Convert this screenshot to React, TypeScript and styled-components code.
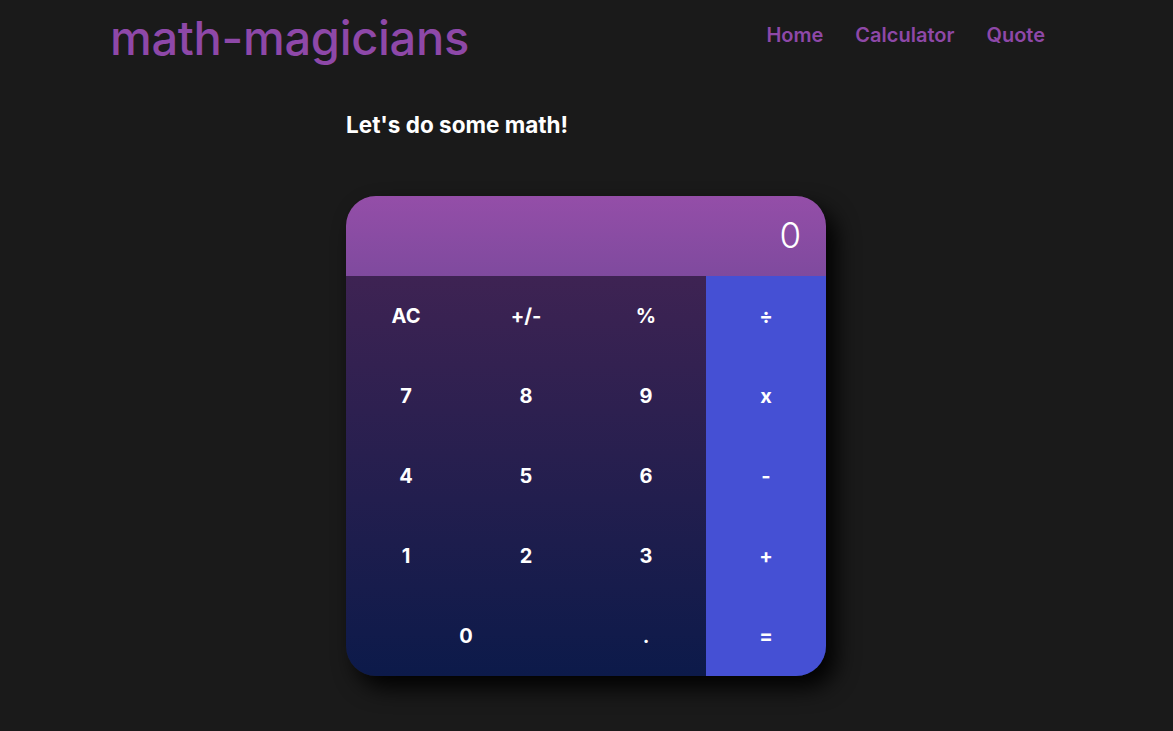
import React from 'react';
import styled, { createGlobalStyle } from 'styled-components';

const Global = createGlobalStyle`
  html, body { margin: 0; padding: 0; background: #1a1a1a; }
  body { font-family: Inter, "Liberation Sans", sans-serif; color: #fff; min-height: 731px; }
  * { box-sizing: border-box; }
`;

const Header = styled.header`
  display: flex;
  align-items: center;
  justify-content: space-between;
  padding: 4px 128px 0 110px;
  height: 70px;
`;

const Title = styled.h1`
  margin: 0;
  font-size: 47px;
  font-weight: 500;
  color: #8e48a8;
  letter-spacing: -0.3px;
`;

const Nav = styled.nav`
  display: flex;
  gap: 32px;
  margin-top: -4px;
`;

const NavLink = styled.a`
  color: #8e48a8;
  font-size: 20px;
  font-weight: 600;
  text-decoration: none;
`;

const Main = styled.main`
  width: 480px;
  margin: 0 0 0 calc(50% - 240.5px);
  display: flex;
  flex-direction: column;
`;

const Heading = styled.h2`
  margin: 40px 0 56px;
  font-size: 22.5px;
  font-weight: 700;
  line-height: 30px;
`;

const Calc = styled.div`
  width: 480px;
  border-radius: 30px;
  overflow: hidden;
  box-shadow: 10px 12px 22px rgba(0, 0, 0, 0.95);
`;

const Display = styled.div`
  height: 80px;
  background: linear-gradient(to bottom, #944ea8, #7f4a9e);
  display: flex;
  align-items: center;
  justify-content: flex-end;
  padding: 0 25px 2px;
  font-size: 35px;
  font-weight: 300;
`;

const Pad = styled.div`
  display: grid;
  grid-template-columns: repeat(4, 120px);
  grid-auto-rows: 80px;
  background: linear-gradient(to bottom, #3e2353, #0c1a4a);
`;

const Key = styled.button<{ $op?: boolean; $wide?: boolean }>`
  border: none;
  margin: 0;
  padding: 0;
  font-family: inherit;
  font-size: 20px;
  font-weight: 700;
  color: #fff;
  background: ${(p) => (p.$op ? '#4550d4' : 'transparent')};
  grid-column: ${(p) => (p.$wide ? 'span 2' : 'auto')};
  cursor: pointer;
`;

const keys: { label: string; op?: boolean; wide?: boolean }[] = [
  { label: 'AC' }, { label: '+/-' }, { label: '%' }, { label: '÷', op: true },
  { label: '7' }, { label: '8' }, { label: '9' }, { label: 'x', op: true },
  { label: '4' }, { label: '5' }, { label: '6' }, { label: '-', op: true },
  { label: '1' }, { label: '2' }, { label: '3' }, { label: '+', op: true },
  { label: '0', wide: true }, { label: '.' }, { label: '=', op: true },
];

export default function App() {
  return (
    <>
      <Global />
      <Header>
        <Title>math-magicians</Title>
        <Nav>
          <NavLink href="#">Home</NavLink>
          <NavLink href="#">Calculator</NavLink>
          <NavLink href="#">Quote</NavLink>
        </Nav>
      </Header>
      <Main>
        <Heading>Let's do some math!</Heading>
        <Calc>
          <Display>0</Display>
          <Pad>
            {keys.map((k) => (
              <Key key={k.label} $op={k.op} $wide={k.wide}>{k.label}</Key>
            ))}
          </Pad>
        </Calc>
      </Main>
    </>
  );
}
